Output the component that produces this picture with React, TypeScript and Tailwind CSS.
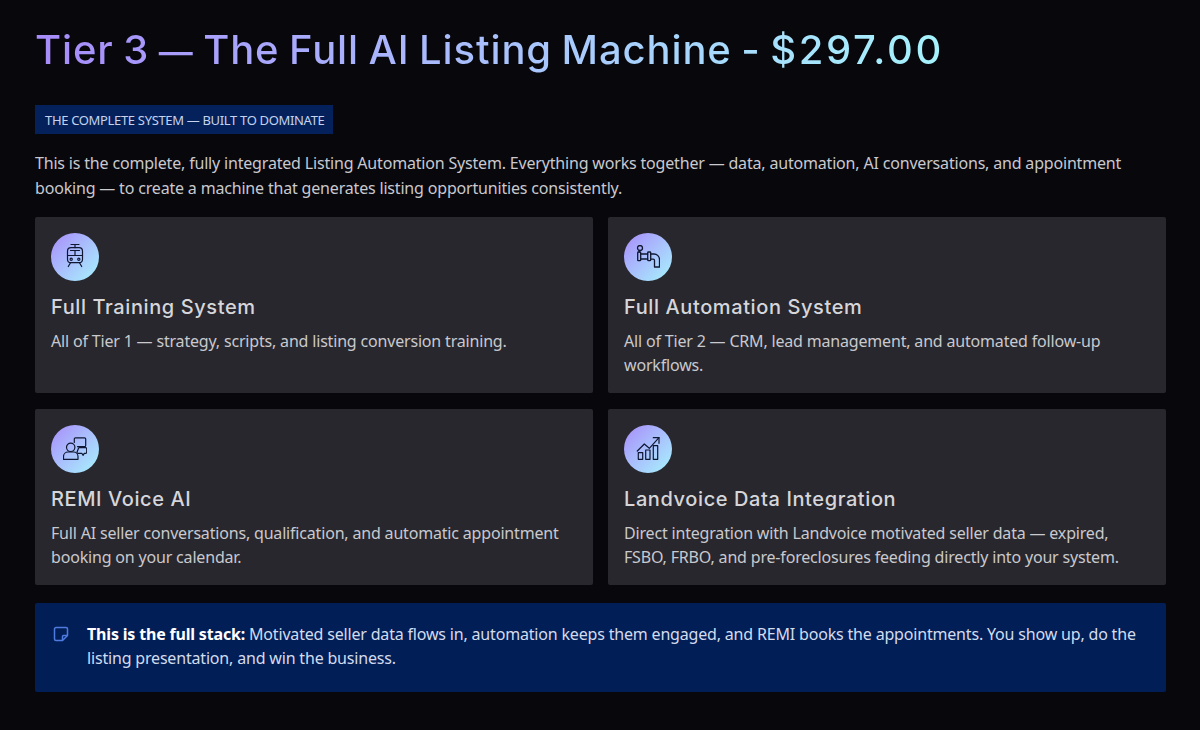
import React from "react";

const ICON_STROKE = "#0f1733";

const TrainIcon = () => (
  <svg viewBox="0 0 24 24" className="w-[24px] h-[24px] overflow-visible" fill="none" stroke={ICON_STROKE} strokeWidth={1.2} strokeLinecap="round" strokeLinejoin="round">
    <path d="M8 -0.5h8M12 -0.5v3.200" />
    <rect x="4.500" y="2.700" width="15" height="15" rx="3.500" />
    <path d="M4.500 10.500h15M7.500 5.500h9M12 5.500v5" />
    <circle cx="8.200" cy="14.200" r="1.100" />
    <circle cx="15.800" cy="14.200" r="1.100" />
    <path d="M7.500 17.700 5.300 21.500M16.500 17.700l2.200 3.800" />
  </svg>
);

const PipeIcon = () => (
  <svg viewBox="0 0 24 24" className="w-[24px] h-[24px]" fill="none" stroke={ICON_STROKE} strokeWidth={1.3} strokeLinecap="round" strokeLinejoin="round">
    <circle cx="4" cy="3" r="2.500" />
    <path d="M3.200 5.500v1.500" />
    <rect x="1.700" y="7" width="3" height="8.700" rx="0.800" />
    <path d="M4.700 9h7M4.700 14h7" />
    <rect x="11.700" y="7" width="3" height="8.700" rx="0.800" />
    <path d="M14.700 9H18a5.500 5.500 0 0 1 5.500 5.500V22h-5v-6.500a1.300 1.300 0 0 0-1.300-1.300h-2.500" />
  </svg>
);

const VoiceIcon = () => (
  <svg viewBox="0 0 24 24" className="w-[24px] h-[24px]" fill="none" stroke={ICON_STROKE} strokeWidth={1.2} strokeLinecap="round" strokeLinejoin="round">
    <circle cx="7.700" cy="10.300" r="4.200" />
    <path d="M0.500 22.300v-2.800a4.500 4.500 0 0 1 4.500-4.500h5.500a4.500 4.500 0 0 1 4.500 4.500v2.800z" />
    <path d="M11.300 5.500V2a1.200 1.200 0 0 1 1.200-1.200h9a1.200 1.200 0 0 1 1.200 1.200v6.500a1.200 1.200 0 0 1-1.200 1.200h-7" />
    <path d="M15.300 11.800a1.100 1.100 0 0 1 1.100-1.100h6.200a1.100 1.100 0 0 1 1.100 1.100v3.400a1.100 1.100 0 0 1-1.100 1.100h-1.300l-1.300 2-1.200-2h-3.700a1.100 1.100 0 0 1-1.100-1.100z" />
  </svg>
);

const ChartIcon = () => (
  <svg viewBox="0 0 24 24" className="w-[24px] h-[24px]" fill="none" stroke={ICON_STROKE} strokeWidth={1.2} strokeLinecap="round" strokeLinejoin="round">
    <path d="M1.300 14 8.300 7l5 4.300L23 0.700" />
    <path d="M17.300 0.700H23V6.300" />
    <rect x="2.300" y="15.700" width="4.400" height="6.600" />
    <rect x="9.700" y="13" width="4.300" height="9.300" />
    <rect x="17.300" y="8.700" width="4.400" height="13.600" />
  </svg>
);

const NoteIcon = () => (
  <svg viewBox="0 0 16 16" className="w-[16px] h-[16px]" fill="none" stroke="#4f7be0" strokeWidth={1.500} strokeLinejoin="round">
    <path d="M3 1.500h10a1.500 1.500 0 0 1 1.500 1.500v6.500l-5 5H3A1.500 1.500 0 0 1 1.500 13V3A1.500 1.500 0 0 1 3 1.500z" />
    <path d="M14.500 9.500h-4a1 1 0 0 0-1 1v4" />
  </svg>
);

const CARDS = [
  { icon: <TrainIcon />, title: "Full Training System", body: "All of Tier 1 — strategy, scripts, and listing conversion training." },
  { icon: <PipeIcon />, title: "Full Automation System", body: "All of Tier 2 — CRM, lead management, and automated follow-up workflows." },
  { icon: <VoiceIcon />, title: "REMI Voice AI", body: "Full AI seller conversations, qualification, and automatic appointment booking on your calendar." },
  { icon: <ChartIcon />, title: "Landvoice Data Integration", body: "Direct integration with Landvoice motivated seller data — expired, FSBO, FRBO, and pre-foreclosures feeding directly into your system." },
];

export default function App() {
  return (
    <div className="w-[1200px] h-[730px] overflow-hidden bg-[#07070c] pl-[35px] pr-[34px] pt-[24px] font-['Noto_Sans',sans-serif] text-[16px] leading-[24.8px] tracking-[-0.18px] text-[#c9c9ce]">
      <h1 className="w-fit font-['Inter',sans-serif] text-[40px] leading-[52px] tracking-[0.88px] [word-spacing:-2px] font-medium bg-gradient-to-r from-[#a78bfa] to-[#a5f3fc] bg-clip-text text-transparent">
        Tier 3 <span className="text-[34px]">—</span> The Full AI Listing Machine - <span className="tracking-[2.6px]">$297.00</span>
      </h1>

      <div className="mt-[27px] w-[298px] h-[29px] px-[10px] flex items-center bg-[#04215c] text-[13px] leading-[20px] tracking-[-0.33px] text-[#c5d3ee] whitespace-nowrap">
        THE COMPLETE SYSTEM — BUILT TO DOMINATE
      </div>

      <p className="mt-[17px]">
        This is the complete, fully integrated Listing Automation System. Everything works together — data, automation, AI conversations, and appointment booking — to create a machine that generates listing opportunities consistently.
      </p>

      <div className="mt-[16px] grid grid-cols-2 gap-x-[15px] gap-y-[16px]">
        {CARDS.map((card) => (
          <div key={card.title} className="h-[176px] bg-[#28272d] rounded-[2px] p-[16px]">
            <div className="w-[48px] h-[48px] rounded-full bg-gradient-to-br from-[#a78bfa] to-[#a5f3fc] flex items-center justify-center">
              {card.icon}
            </div>
            <h3 className="mt-[11px] font-['Inter',sans-serif] text-[20px] leading-[30px] tracking-[0.6px] font-medium text-[#d6d6da]">{card.title}</h3>
            <p className="mt-[7px]">{card.body}</p>
          </div>
        ))}
      </div>

      <div className="mt-[18px] h-[89px] bg-[#021e57] rounded-[2px] flex gap-[18px] pl-[18px] pr-[20px] pt-[19px] text-[#d3dcee]">
        <div className="pt-[4px] flex-shrink-0"><NoteIcon /></div>
        <p><strong className="font-bold text-white">This is the full stack:</strong> Motivated seller data flows in, automation keeps them engaged, and REMI books the appointments. You show up, do the listing presentation, and win the business.</p>
      </div>
    </div>
  );
}
